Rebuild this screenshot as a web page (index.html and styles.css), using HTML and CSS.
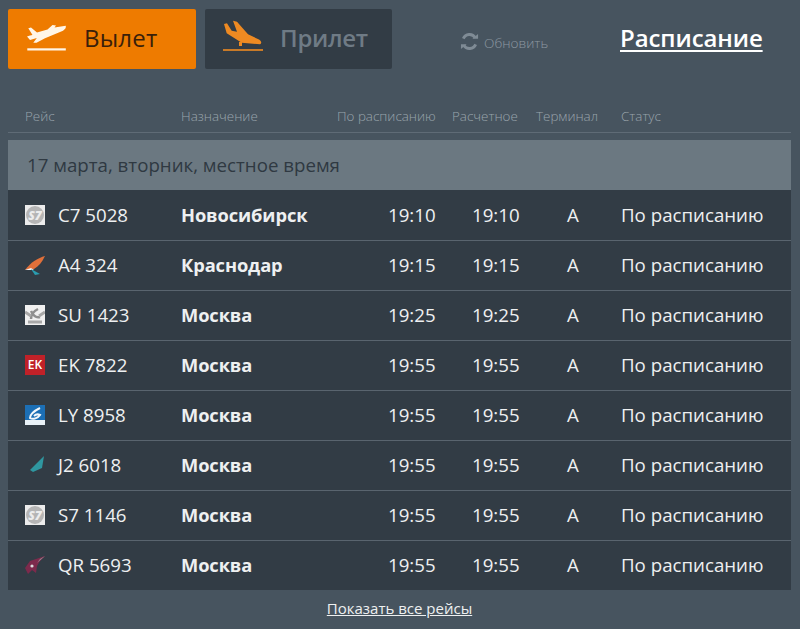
FILE: index.html
```html
<!DOCTYPE html>
<html lang="ru">
<head>
<meta charset="utf-8">
<title>Расписание</title>
<link rel="stylesheet" href="styles.css">
</head>
<body>
<div class="board">
  <div class="top">
    <a class="tab tab-on">
      <svg class="tab-icon" viewBox="0 0 40 30"><path fill="#fff6e8" d="M1.300 4.300L4 3.500 10 8.500 20.500 5.500 25.500 1 29 1.500 27.500 3.500 38.700 1.800C39.500 3.500 38 5.500 36 6.700L18 14.300 9.500 18.700 6.300 18.700 9.800 14 3 16 0 12.500 3 11.500 5.500 11z"/><rect x="0.300" y="24.300" width="38.500" height="2.200" fill="#fff6e8"/></svg>
      <span>Вылет</span>
    </a>
    <a class="tab tab-off">
      <svg class="tab-icon" viewBox="0 0 40 30"><path fill="#ee8a22" d="M1 0L4 -.7 8.700 6.700 14 7.700 10 -3.300 14 -2.300 25 10.300 36 15.500C38.500 17 39 19.500 37 20.300L18.700 18.700 3.700 9.300z"/><rect x="16" y="18" width="3" height="4" fill="#ee8a22"/><rect x="0" y="25.200" width="40" height="1.600" fill="#ee8a22"/></svg>
      <span>Прилет</span>
    </a>
    <a class="refresh">
      <svg class="refresh-icon" viewBox="0 0 20 20"><path fill="none" stroke="#7f8b95" stroke-width="3" d="M3.500 7A7 7 0 0 1 16 6M16.500 13A7 7 0 0 1 4 14"/><path fill="#7f8b95" d="M13 7h6V2zM7 13H1v5z"/></svg>
      <span class="refresh-label">Обновить</span>
    </a>
    <a class="schedule">Расписание</a>
  </div>

  <div class="cols grid">
    <div>Рейс</div><div>Назначение</div><div>По расписанию</div><div>Расчетное</div><div>Терминал</div><div>Статус</div>
  </div>

  <div class="date">17 марта, вторник, местное время</div>

  <div class="rows">
    <div class="row grid">
      <div class="flight"><svg class="logo" viewBox="0 0 20 20"><rect width="20" height="20" fill="#ececec"/><circle cx="10" cy="10" r="9" fill="#b5b5b5"/><text class="logo-s7" x="10" y="14.500">S7</text></svg><span>C7 5028</span></div>
      <div class="dest">Новосибирск</div><div class="time">19:10</div><div class="time">19:10</div><div class="term">A</div><div>По расписанию</div>
    </div>
    <div class="row grid">
      <div class="flight"><svg class="logo" viewBox="0 0 20 20"><path fill="#e0703a" d="M20 1C13 3 6 7 0 15l9-1c5-3 8-7 11-13z"/><path fill="#f2f2f2" d="M0 15l6-2 3 2z"/><path fill="#2a9db0" d="M6 14l9 5-5 1z"/></svg><span>A4 324</span></div>
      <div class="dest">Краснодар</div><div class="time">19:15</div><div class="time">19:15</div><div class="term">A</div><div>По расписанию</div>
    </div>
    <div class="row grid">
      <div class="flight"><svg class="logo" viewBox="0 0 20 20"><rect width="20" height="20" fill="#f0f0f0"/><path fill="none" stroke="#8f8f8f" stroke-width="2.500" d="M6 6c3 6 6 7 9 6M13 4c-4 2-7 6-7 10"/><path fill="none" stroke="#a8a8a8" stroke-width="3" d="M0 7l6 4M14 11l6-4M3 17h14"/></svg><span>SU 1423</span></div>
      <div class="dest">Москва</div><div class="time">19:25</div><div class="time">19:25</div><div class="term">A</div><div>По расписанию</div>
    </div>
    <div class="row grid">
      <div class="flight"><span class="logo logo-ek">EK</span><span>EK 7822</span></div>
      <div class="dest">Москва</div><div class="time">19:55</div><div class="time">19:55</div><div class="term">A</div><div>По расписанию</div>
    </div>
    <div class="row grid">
      <div class="flight"><svg class="logo" viewBox="0 0 20 20"><rect width="20" height="20" fill="#1c6fb5"/><rect y="15" width="20" height="5" fill="#e8f1f7"/><path fill="none" stroke="#f4f8fb" stroke-width="2" d="M15 3C9 6 5 10 5 13c3 2 8 0 10-3-2-1-4-1-6 1"/></svg><span>LY 8958</span></div>
      <div class="dest">Москва</div><div class="time">19:55</div><div class="time">19:55</div><div class="term">A</div><div>По расписанию</div>
    </div>
    <div class="row grid">
      <div class="flight"><svg class="logo" viewBox="0 0 20 20"><path fill="#2f97a0" d="M19 1L17 13 8 17 5 15z"/></svg><span>J2 6018</span></div>
      <div class="dest">Москва</div><div class="time">19:55</div><div class="time">19:55</div><div class="term">A</div><div>По расписанию</div>
    </div>
    <div class="row grid">
      <div class="flight"><svg class="logo" viewBox="0 0 20 20"><rect width="20" height="20" fill="#ececec"/><circle cx="10" cy="10" r="9" fill="#b5b5b5"/><text class="logo-s7" x="10" y="14.500">S7</text></svg><span>S7 1146</span></div>
      <div class="dest">Москва</div><div class="time">19:55</div><div class="time">19:55</div><div class="term">A</div><div>По расписанию</div>
    </div>
    <div class="row grid">
      <div class="flight"><svg class="logo" viewBox="0 0 20 20"><path fill="#7d2a4c" d="M20 1L11 4 5 6 0 13l3 6 4-4 4 3 1-7 3-5z"/><circle cx="7" cy="11" r="1.600" fill="#ddd"/><path fill="#9a8a92" d="M20 1l-8 7 3-4z"/></svg><span>QR 5693</span></div>
      <div class="dest">Москва</div><div class="time">19:55</div><div class="time">19:55</div><div class="term">A</div><div>По расписанию</div>
    </div>
  </div>

  <div class="more"><a>Показать все рейсы</a></div>
</div>
</body>
</html>
```
FILE: styles.css
```css
* { box-sizing: border-box; }
html, body { margin: 0; height: 100%; }
body {
  background: #47545f;
  font-family: "Open Sans", sans-serif;
  color: #eef0f1;
}
.board { width: 800px; height: 629px; padding: 9px 9px 0 8px; overflow: hidden; }
.top { display: flex; height: 60px; align-items: stretch; }
.tab {
  display: flex;
  align-items: center;
  border-radius: 2px;
  font-size: 24px;
}
.tab span { margin-bottom: 3px; }
.tab-on { width: 188px; background: #ee7b00; color: #3a1f0a; padding-left: 19px; gap: 17px; letter-spacing: .2px; }
.tab-off { width: 187px; margin-left: 9px; background: #323c45; color: #6f7b85; padding-left: 18px; font-weight: 600; gap: 17px; letter-spacing: -.3px; }
.tab-icon { width: 40px; height: 30px; flex: none; overflow: visible; }
.refresh {
  display: flex;
  align-items: center;
  margin-left: 68px;
  gap: 5px;
  width: 160px;
  font-size: 13.600px;
  font-weight: 300;
  color: #8d98a1;
  padding-top: 4px;
}
.refresh-icon { width: 19px; height: 19px; }
.refresh-label { margin-top: 2px; }
.schedule {
  align-self: center;
  margin-top: -3px;
  font-size: 24px;
  line-height: 30px;
  font-weight: 600;
  color: #fff;
  letter-spacing: -.1px;
  text-decoration: underline;
  text-decoration-thickness: 2px;
  text-underline-offset: 3px;
}
.grid { display: grid; grid-template-columns: 156px 156px 115px 84px 85px 1fr; padding-left: 17px; }
.cols {
  margin-top: 34px;
  height: 30px;
  align-items: center;
  border-bottom: 1px solid #5f6b76;
  font-size: 13.400px;
  font-weight: 300;
  color: #9aa4ac;
  padding-bottom: 4px;
}
.date {
  margin-top: 7px;
  height: 50px;
  padding: 0 0 2px 19px;
  display: flex;
  align-items: center;
  background: #6b7881;
  color: #2f3942;
  font-size: 18.700px;
}
.rows { background: #323c45; padding-top: 1px; }
.row {
  height: 50px;
  align-items: center;
  border-bottom: 1px solid #59646e;
  font-size: 18.700px;
  padding-bottom: 2px;
}
.row:last-child { height: 49px; border-bottom: 0; }
.flight { display: flex; align-items: center; gap: 13px; }
.logo { width: 20px; height: 20px; flex: none; display: block; }
.logo-s7 {
  fill: #ececec;
  font-size: 12px;
  font-weight: 800;
  font-style: italic;
  text-anchor: middle;
}
.logo-ek {
  background: #c02128;
  color: #fff;
  font-size: 12px;
  font-weight: 600;
  line-height: 20px;
  text-align: center;
}
.dest { font-weight: 700; font-size: 18.300px; letter-spacing: -.1px; }
.time { padding-left: 51px; }
.row .time + .time { padding-left: 20px; }
.term { padding-left: 31px; }
.more { text-align: center; padding-top: 8px; font-size: 15px; color: #eef0f1; }
.more a { text-decoration: underline; }
```
